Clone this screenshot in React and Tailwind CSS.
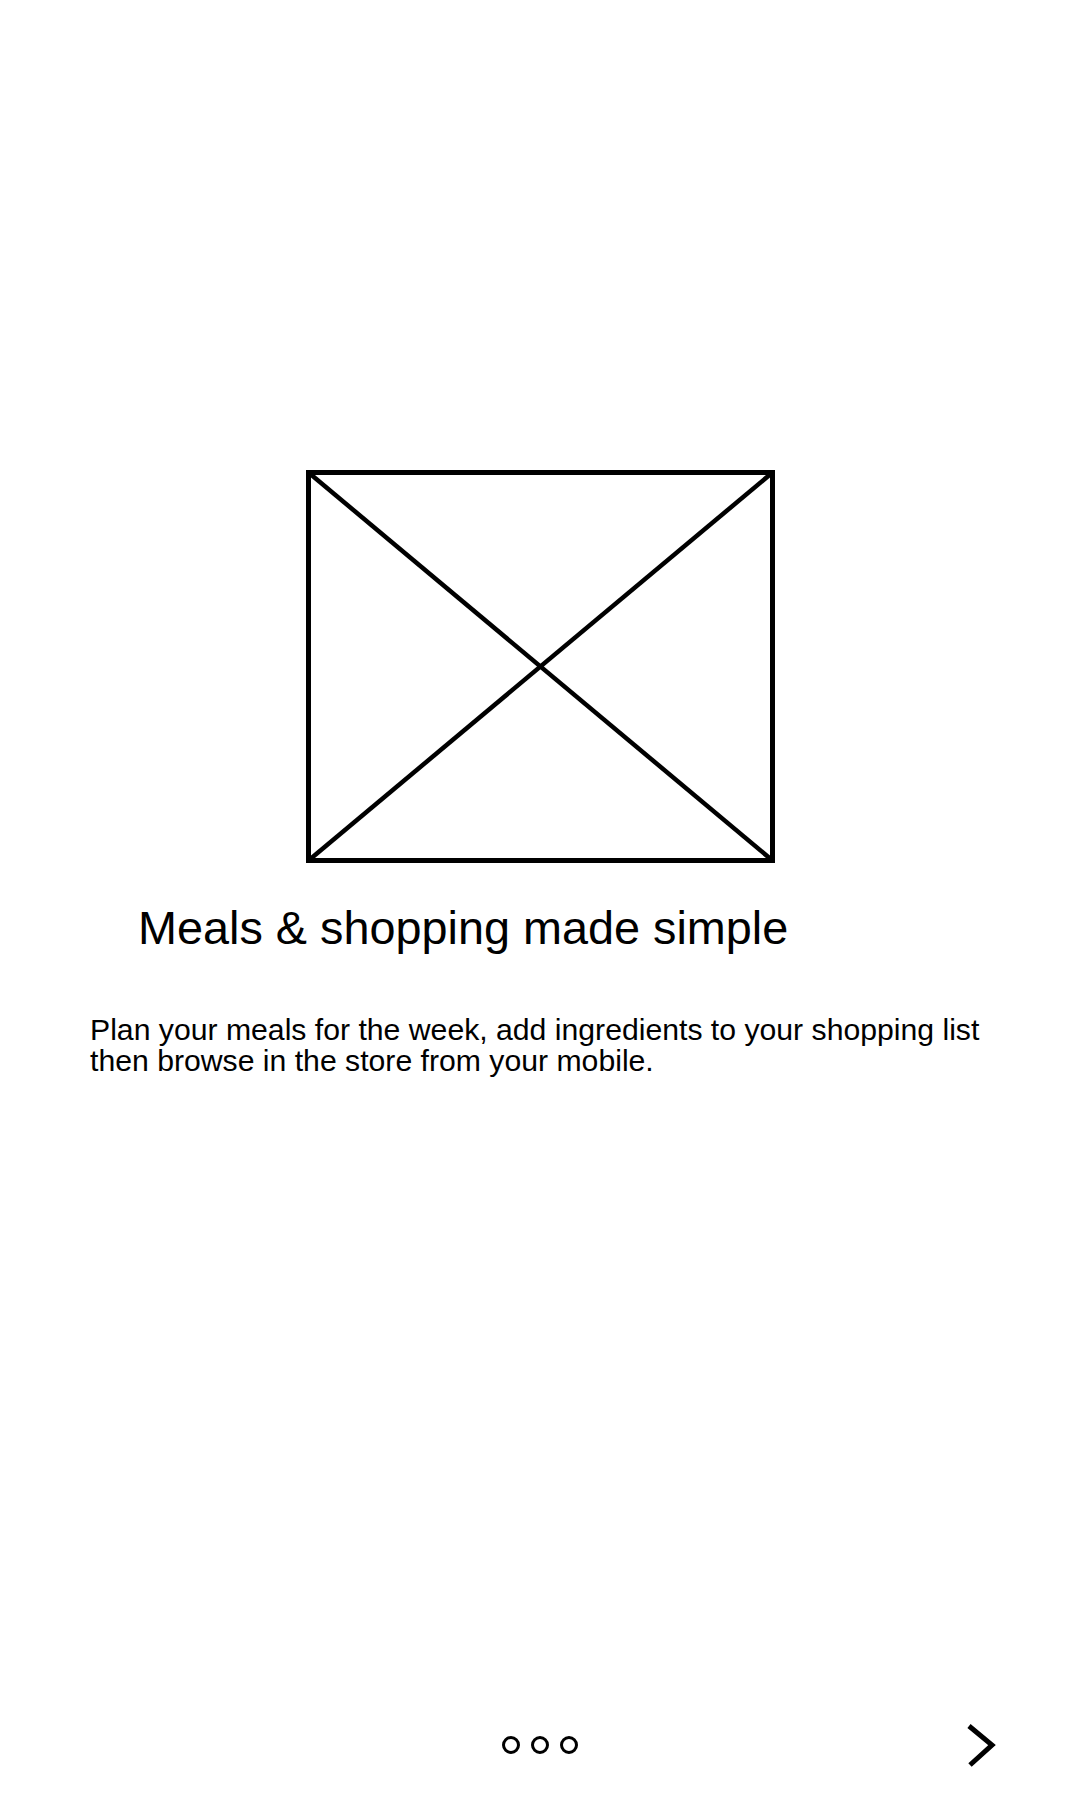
export default function App() {
  return (
    <div className="flex h-[1800px] w-[1080px] flex-col bg-white font-['Liberation_Sans',Arial,sans-serif] text-black">
      <div className="pt-[470px] flex justify-center">
        <svg width="469" height="393" viewBox="0 0 469 393" className="block">
          <rect x="2.5" y="2.5" width="464" height="388" fill="none" stroke="#000" strokeWidth="5" />
          <line x1="2.5" y1="2.5" x2="466.5" y2="390.5" stroke="#000" strokeWidth="4.5" />
          <line x1="466.5" y1="2.5" x2="2.5" y2="390.5" stroke="#000" strokeWidth="4.5" />
        </svg>
      </div>
      <h1 className="mt-[42px] pl-[138px] text-[46.8px] leading-[47px] font-normal">
        Meals &amp; shopping made simple
      </h1>
      <p className="mt-[62px] ml-[90px] w-[910px] text-[30.2px] leading-[31px]">
        Plan your meals for the week, add ingredients to your shopping list then browse in the store from your mobile.
      </p>
      <div className="mt-auto mb-[30px] grid h-[50px] grid-cols-[1fr_auto_1fr] items-center">
        <div />
        <div className="flex items-center gap-[11px]">
          <span className="block h-[18px] w-[18px] rounded-full border-[3px] border-black" />
          <span className="block h-[18px] w-[18px] rounded-full border-[3px] border-black" />
          <span className="block h-[18px] w-[18px] rounded-full border-[3px] border-black" />
        </div>
        <div className="flex justify-end pr-[84px]">
          <svg width="32" height="50" viewBox="0 0 32 50" className="block">
            <polyline points="5,6 28,25 6,45" fill="none" stroke="#000" strokeWidth="5" strokeLinejoin="miter" />
          </svg>
        </div>
      </div>
    </div>
  );
}
